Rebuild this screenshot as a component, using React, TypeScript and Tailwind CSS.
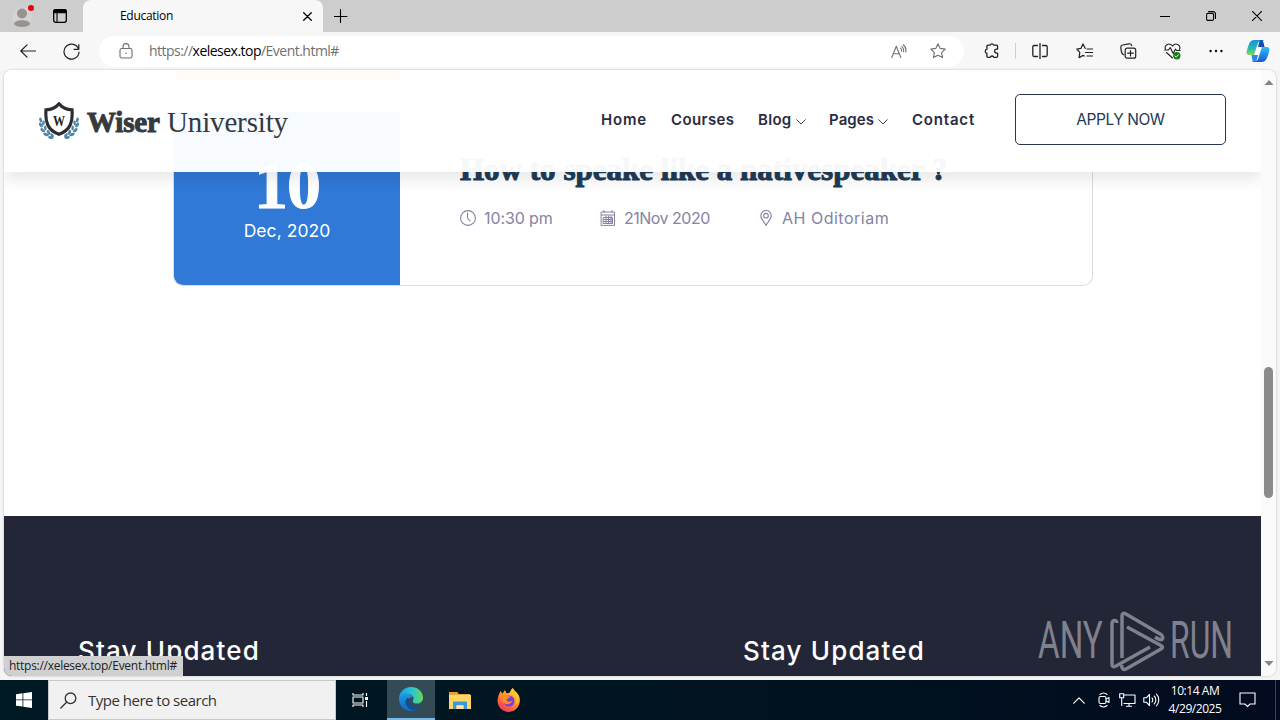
import type { ReactNode } from 'react';

const ui = "font-['Open_Sans','Noto_Sans',sans-serif]";

type SvgProps = { w: number; h: number; box: string; className?: string; children: ReactNode };
function Svg({ w, h, box, className = '', children }: SvgProps) {
  return (
    <svg width={w} height={h} viewBox={box} fill="none" stroke="currentColor" strokeWidth="1.1" strokeLinecap="round" strokeLinejoin="round" className={`block shrink-0 ${className}`}>
      {children}
    </svg>
  );
}

function TabStrip() {
  return (
    <div className="flex h-8 shrink-0 items-stretch bg-[#cdcdcd] text-black">
      <div className="flex w-[83px] items-center rounded-br-md pl-3">
        <Svg w={24} h={24} box="0 0 24 24">
          <circle cx="10" cy="13" r="10" fill="#d6d3d1" stroke="none" />
          <circle cx="10" cy="9.5" r="5" fill="#969290" stroke="none" />
          <path d="M2 20c0-5 16-5 16 0-2 4-14 4-16 0z" fill="#969290" stroke="none" />
          <circle cx="19" cy="4" r="3" fill="#e3000f" stroke="none" />
        </Svg>
        <Svg w={14} h={14} box="0 0 14 14" className="ml-[17px]">
          <rect x="0.7" y="0.7" width="12.6" height="12.6" rx="2" strokeWidth="1.3" />
          <path d="M1 1h12v2.800H1z" fill="currentColor" />
          <path d="M4 4v9" />
        </Svg>
      </div>
      <div className="flex w-[240px] items-center rounded-t-lg bg-[#f7f7f7] pl-[37px] pr-[11px]">
        <span className={`${ui} grow whitespace-nowrap text-[12px] leading-4 tracking-[-0.3px]`}>Education</span>
        <Svg w={9} h={9} box="0 0 9 9"><path d="M.7.7l7.6 7.6M8.3.7L.7 8.3" strokeWidth="1.3" /></Svg>
      </div>
      <div className="flex grow items-center justify-between pl-[11px] pr-[18px]">
        <Svg w={14} h={14} box="0 0 14 14"><path d="M6.500 .5v13M0 7.500h13" /></Svg>
        <div className="flex items-center">
          <Svg w={10} h={10} box="0 0 10 10"><path d="M0 5.5h10" /></Svg>
          <Svg w={10} h={10} box="0 0 10 10" className="ml-[36px]">
            <rect x=".6" y="2.4" width="7" height="7" rx="1.4" />
            <path d="M2.5.6h4.7a2.3 2.3 0 0 1 2.3 2.3v4.6" />
          </Svg>
          <Svg w={10} h={10} box="0 0 10 10" className="ml-[36px]"><path d="M.3.3l9.4 9.4M9.7.3L.3 9.7" /></Svg>
        </div>
      </div>
    </div>
  );
}

const starPath = 'M8 .8l2.2 4.6 5 .7-3.6 3.5.9 5L8 12.2l-4.500 2.4.9-5L.8 6.1l5-.7z';

function Toolbar() {
  return (
    <div className="flex h-[38px] shrink-0 items-center bg-[#f7f7f7] text-[#222]">
      <Svg w={16} h={14} box="0 0 16 14" className="ml-5"><path d="M15.5 7H.8M7 .8L.8 7 7 13.2" strokeWidth="1.2" /></Svg>
      <Svg w={17} h={17} box="0 0 17 17" className="ml-[27px]">
        <path d="M15.6 6.2A7.5 7.5 0 1 0 16 9M15.8 1.5v4.8H11" strokeWidth="1.2" />
      </Svg>
      <div className="ml-[19px] flex h-[31px] w-[865px] items-center rounded-full bg-white pl-5 pr-[18px] text-[#707070]">
        <Svg w={14} h={16} box="0 0 14 16">
          <rect x="1" y="5.5" width="12" height="9.5" rx="1.8" />
          <path d="M4 5.5V3.6a3 3 0 0 1 6 0v1.9" />
          <circle cx="7" cy="10.2" r=".8" fill="currentColor" stroke="none" />
        </Svg>
        <span className={`${ui} ml-4 grow whitespace-nowrap text-[14px] leading-5 tracking-[-0.52px]`}>
          https://<span className="text-black">xelesex.top</span>/Event.html#
        </span>
        <Svg w={16} h={15} box="0 0 16 15">
          <path d="M.8 13.5L5.3 2.3l4.5 11.2M2.3 9.7h6M9.500 4.2c.9.8 1.2 1.8 1 3M10.8 2.3c1.700 1.4 2.2 3.2 1.700 5.4M12.3.7c2.4 1.9 3.1 4.4 2.4 7.3" />
        </Svg>
        <Svg w={16} h={16} box="0 0 16 16" className="ml-[23px]"><path d={starPath} /></Svg>
      </div>
      <Svg w={16} h={16} box="0 0 16 16" className="ml-5">
        <path d="M4 2.2h2.3a1.7 1.7 0 0 1 3.3 0h2.9c.7 0 1.1.4 1.1 1.1v2.8h-1a2 2 0 0 0 0 4h1v3.2c0 .7-.4 1.1-1.1 1.1H9.8a1.8 1.8 0 0 0-3.5 0H4c-.7 0-1.1-.4-1.1-1.1v-3a2.1 2.1 0 0 1 0-4.1V3.3c0-.7.4-1.1 1.1-1.1z" strokeWidth="1.3" />
      </Svg>
      <div className="ml-[15px] h-4 w-px bg-[#cfcfcf]" />
      <Svg w={16} h={16} box="0 0 16 16" className="ml-4">
        <path d="M8 .5v15M5.5 2.5H2.200C1.300 2.500.8 3 .8 4v8c0 1 .5 1.500 1.400 1.500h3.300M10.500 2.500h3.300c.9 0 1.400.5 1.400 1.500v8c0 1-.5 1.500-1.400 1.500h-3.300" strokeWidth="1.3" />
      </Svg>
      <Svg w={17} h={16} box="0 0 17 16" className="ml-7">
        <path d="M9.300 5.400L7 .9 4.900 5.400.8 6.100l3 3.300-.7 5.200 4-2.200 1.200.6M11 6h5.500M9.500 9.500h7M11 13h5.500" strokeWidth="1.2" />
      </Svg>
      <Svg w={17} h={16} box="0 0 17 16" className="ml-[27px]">
        <rect x="5.200" y="5.200" width="10.500" height="10" rx="2" strokeWidth="1.2" />
        <path d="M10.500 7.500v5.500M7.700 10.200h5.600M3.700 11.800C2 11 1.500 10 1.300 8.400L.8 4.500C.7 3 1.300 2.200 2.600 2L9 .8c1.500-.2 2.400.4 2.700 1.800" strokeWidth="1.2" />
      </Svg>
      <Svg w={18} h={17} box="0 0 18 17" className="ml-[27px]">
        <path d="M1.500 6.500C-.2 2.500 4.800-1.200 8.500 3c3.700-4.200 8.700-.5 7 3.500M.8 7h3.700l1.700-2.500 3 6L11.500 6l1 1.500h3.500M2.500 9.500l6 5.500" strokeWidth="1.1" />
        <circle cx="12.800" cy="12.800" r="3.700" fill="#13801a" stroke="none" />
        <path d="M11 12.900l1.200 1.200 2.400-2.400" stroke="white" strokeWidth=".9" />
      </Svg>
      <Svg w={14} h={4} box="0 0 14 4" className="ml-[27px]">
        <g fill="#111" stroke="none"><circle cx="1.600" cy="2" r="1.200" /><circle cx="7" cy="2" r="1.200" /><circle cx="12.400" cy="2" r="1.200" /></g>
      </Svg>
      <Svg w={24} h={22} box="0 0 24 22" className="ml-[23px]">
        <defs>
          <linearGradient id="cpA" x1="0" y1="0" x2="0" y2="1"><stop stopColor="#1590df" /><stop offset=".55" stopColor="#29b9b0" /><stop offset="1" stopColor="#7ed957" /></linearGradient>
          <linearGradient id="cpB" x1="0" y1="0" x2="0" y2="1"><stop stopColor="#35bdf5" /><stop offset="1" stopColor="#155bd5" /></linearGradient>
        </defs>
        <path d="M17 0H8C4 0 3 4 1.500 8.500S0 15 4 15h4L12 3c.5-1.500 1.500-2 3-2h3z" fill="url(#cpA)" stroke="none" />
        <path d="M7 22h9c4 0 5-4 6.500-8.500S24 7 20 7h-4l-4 12c-.5 1.500-1.500 2-3 2H6z" fill="url(#cpB)" stroke="none" />
        <path d="M15 0c2 0 2.500 2 3.500 7H12l1-4c.5-2 1-3 2-3z" fill="#164bb4" stroke="none" />
        <path d="M9 22c-2 0-3-2-3.500-7H12l-1 4c-.5 2-1 3-2 3z" fill="#2688ed" stroke="none" />
        <path d="M11 7h4l-2.500 8H9z" fill="#fff" stroke="none" />
      </Svg>
    </div>
  );
}

function Leaves() {
  return (
    <g fill="#4f87aa" stroke="none">
      <ellipse cx="1.700" cy="18" rx="1.400" ry="2.600" transform="rotate(-15 1.700 18)" />
      <ellipse cx="1.800" cy="23" rx="1.500" ry="2.700" transform="rotate(-35 1.800 23)" />
      <ellipse cx="4.400" cy="21" rx="1.300" ry="2.500" transform="rotate(10 4.400 21)" />
      <ellipse cx="3.700" cy="28.300" rx="1.500" ry="2.800" transform="rotate(-50 3.700 28.300)" />
      <ellipse cx="6.300" cy="26" rx="1.300" ry="2.600" transform="rotate(-5 6.300 26)" />
      <ellipse cx="7" cy="32.500" rx="1.500" ry="2.900" transform="rotate(-68 7 32.500)" />
      <ellipse cx="9.500" cy="30.300" rx="1.400" ry="2.600" transform="rotate(-25 9.500 30.300)" />
      <ellipse cx="11.800" cy="35.500" rx="1.400" ry="2.800" transform="rotate(-85 11.800 35.500)" />
      <ellipse cx="13" cy="33.200" rx="1.300" ry="2.400" transform="rotate(-45 13 33.200)" />
    </g>
  );
}

function Logo() {
  return (
    <div className="flex items-start text-[#353940]">
      <svg width="40" height="38" viewBox="0 0 40 38" className="block shrink-0">
        <Leaves />
        <g transform="translate(40 0) scale(-1 1)"><Leaves /></g>
        <path d="M20 1.800c3.500 4.200 8 6 13 6 1 12-1.500 20.500-13 24.500C8.500 28.300 6 19.800 7 7.800c5 0 9.500-1.800 13-6z" fill="white" stroke="#2c2c32" strokeWidth="3.200" />
        <text x="20" y="24" textAnchor="middle" fontSize="14" fontWeight="bold" fill="#222" fontFamily="Liberation Serif, serif" textLength="12" lengthAdjust="spacingAndGlyphs">W</text>
      </svg>
      <div className="ml-2 flex whitespace-nowrap font-['Liberation_Serif',serif] text-[29px] leading-[40px]">
        <span className="w-[80px] font-bold tracking-[-0.150px] [-webkit-text-stroke:1px_#353940]">Wiser</span>
        <span className="tracking-[-0.150px]">University</span>
      </div>
    </div>
  );
}

function Chevron() {
  return <Svg w={10} h={6} box="0 0 10 6" className="ml-[4px] mt-[3px]"><path d="M.7.700L5 5 9.300.7" strokeWidth=".9" /></Svg>;
}

function SiteHeader() {
  return (
    <header className="absolute inset-x-0 top-0 flex h-[102px] items-start bg-white/[0.96] pl-[35px] pr-[35px] pt-6 shadow-[0_8px_14px_rgba(0,0,0,0.09)]">
      <div className="w-[562px] pt-[8px]"><Logo /></div>
      <nav className="flex h-[51px] items-center whitespace-nowrap pt-px font-['Inter',sans-serif] text-[15px] font-semibold text-[#2b2c3f]">
        <span className="w-[70px] tracking-[0.8px]">Home</span>
        <span className="w-[87px] tracking-[0.400px]">Courses</span>
        <span className="flex w-[71px] items-center tracking-[0.300px]">Blog<Chevron /></span>
        <span className="flex w-[83px] items-center tracking-[0.100px]">Pages<Chevron /></span>
        <span className="w-[103px] tracking-[0.800px]">Contact</span>
      </nav>
      <button className="h-[51px] w-[211px] shrink-0 whitespace-nowrap rounded-[5px] border border-[#24384f] font-['Inter',sans-serif] text-[15.500px] tracking-[-0.45px] text-[#213a58]">APPLY NOW</button>
    </header>
  );
}

function EventCard() {
  return (
    <article className="ml-[169px] mt-8 flex h-[174px] w-[920px] overflow-hidden rounded-b-[10px] border border-t-0 border-[#dcdcdc] bg-white">
      <div className="flex w-[226px] shrink-0 flex-col items-center bg-[#3079d7] text-white">
        <span className="mt-[41px] whitespace-nowrap font-['Liberation_Serif',serif] text-[68px] font-bold leading-[65px] tracking-[-1px] [-webkit-text-stroke:1px_white]">10</span>
        <span className="mt-px whitespace-nowrap font-['Inter',sans-serif] text-[17.500px] leading-6 tracking-[0.05px]">Dec, 2020</span>
      </div>
      <div className="pl-[60px] pt-[40px]">
        <h2 className="whitespace-nowrap font-['Liberation_Serif',serif] text-[31px] font-bold leading-9 tracking-[0.01px] text-[#203b58] [-webkit-text-stroke:1px_#203b58]">How to speake like a nativespeaker ?</h2>
        <div className="mt-[18px] flex h-6 items-center whitespace-nowrap font-['Inter',sans-serif] text-[16px] text-[#8583a4]">
          <Svg w={16} h={16} box="0 0 16 16"><circle cx="8" cy="8" r="7.400" /><path d="M7.500 3v5l2.500 3" /></Svg>
          <span className="ml-2 w-[116px] tracking-[-0.100px]">10:30 pm</span>
          <Svg w={16} h={16} box="0 0 16 16">
            <path d="M1.500 2h13v13.400h-13zM1.500 5h13M4 .5v2M12 .5v2M3.500 7.500h9v6h-9zM6 6v7.500M8.500 6v7.500M11 6v7.500M3.500 9.500h9M3.500 11.500h9" strokeWidth="1" />
          </Svg>
          <span className="ml-2 w-[136px] tracking-[-0.500px]">21Nov 2020</span>
          <Svg w={12} h={16} box="0 0 12 16"><path d="M6 15.400C3 10.500.8 8.500.8 5.700a5.200 5.200 0 0 1 10.400 0c0 2.800-2.200 4.800-5.200 9.700z" /><circle cx="6" cy="5.700" r="2.300" /></Svg>
          <span className="ml-[10px] tracking-[0.500px]">AH Oditoriam</span>
        </div>
      </div>
    </article>
  );
}

function Watermark() {
  return (
    <div className="absolute bottom-1 left-[1034px] flex h-[62px] items-center text-[#858692] opacity-95">
      <div className="w-[70px] whitespace-nowrap font-['Roboto',sans-serif] text-[51px] leading-[62px]"><span className="inline-block origin-left scale-x-[0.65]">ANY</span></div>
      <svg width="58" height="62" viewBox="0 0 58 62" fill="none" stroke="currentColor" strokeWidth="3.500" strokeLinejoin="round" className="block shrink-0">
        <path d="M9 13C9 9.500 4 9.500 4 14V54Q4 58 8 56L42 37" />
        <path d="M14 48V6Q14 2 18 4L53 24.500Q56 27 54 29.500 52 30.500 47 27" />
        <path d="M19 17L53 35.500Q56 37 53 39L18 59Q14 61 13.500 55" />
      </svg>
      <div className="ml-[4px] w-[70px] whitespace-nowrap font-['Roboto',sans-serif] text-[51px] leading-[62px]"><span className="inline-block origin-left scale-x-[0.625]">RUN</span></div>
    </div>
  );
}

function Page() {
  return (
    <div className="mx-1 flex h-[606px] shrink-0 overflow-hidden rounded-lg bg-white shadow-[0_0_2px_rgba(0,0,0,0.3)]">
      <main className="relative flex w-[1257px] flex-col overflow-hidden bg-white">
        <div className="ml-[172px] h-[10px] w-[224px] shrink-0 bg-[#ffb42f]" />
        <EventCard />
        <footer className="mt-[230px] flex h-[160px] shrink-0 bg-[#232637] pl-[74px] pt-[116px] font-['Inter',sans-serif] text-[26px] font-medium leading-[38px] tracking-[1.150px] text-white">
          <div className="w-[665px]">Stay Updated</div>
          <div>Stay Updated</div>
        </footer>
        <SiteHeader />
        <Watermark />
        <div className={`${ui} absolute bottom-0 left-0 h-5 w-[179px] whitespace-nowrap bg-[#d0d0d0] pl-[5px] text-[12px] leading-5 tracking-[-0.280px] text-[#222]`}>https://xelesex.top/Event.html#</div>
      </main>
      <div className="flex w-[15px] flex-col items-center bg-[#fafafa] pb-[10px] pt-[10px] text-[#858585]">
        <Svg w={10} h={5} box="0 0 10 5"><path d="M5 0l4.500 5H.5z" fill="currentColor" stroke="none" /></Svg>
        <div className="mt-[282px] h-[131px] w-[9px] rounded-full bg-[#8b8b8b]" />
        <Svg w={10} h={5} box="0 0 10 5" className="mt-auto"><path d="M5 5L.5 0h9z" fill="currentColor" stroke="none" /></Svg>
      </div>
    </div>
  );
}

function EdgeLogo() {
  return (
    <svg width="24" height="24" viewBox="0 0 24 24" className="block">
      <defs>
        <linearGradient id="edA" x1="0" y1="0" x2="1" y2="0"><stop stopColor="#199de2" /><stop offset=".55" stopColor="#29c6cf" /><stop offset="1" stopColor="#64dc54" /></linearGradient>
        <linearGradient id="edB" x1="0" y1="0" x2="0" y2="1"><stop stopColor="#1c9be5" /><stop offset="1" stopColor="#1267c3" /></linearGradient>
      </defs>
      <path d="M0 12C0 5 5 0 12 0s12 5 12 10.500c0 4-3 6-6 6-3.500 0-5-1.500-4-3 2-3-1-6.500-5-6.500-5 0-8 2.500-9 5z" fill="url(#edA)" />
      <path d="M0 12c1-4 4.500-6 8.500-5.500 3 .3 5 2 5 4-4-.5-5.500 2-4.500 5 1.500 4 7 6 12 3.500C19 22 16 24 12 24 5 24 0 18.500 0 12z" fill="url(#edB)" />
      <path d="M9 10.500c-3 2-3.500 6-1 9 2 2.500 5 4 8 3.600 2.500-.8 4-2.400 5.400-4.100-6 2.500-13-1-12-7z" fill="#174d91" />
    </svg>
  );
}

function Firefox() {
  return (
    <svg width="24" height="24" viewBox="0 0 24 24" className="block">
      <defs><linearGradient id="ff" x1=".8" y1="0" x2=".2" y2="1"><stop stopColor="#ffe83b" /><stop offset=".45" stopColor="#ff9226" /><stop offset="1" stopColor="#f92966" /></linearGradient></defs>
      <path d="M3.500 3l2 2.500L8 2l1.500 3.200c2 0 3-.2 4-2C14 1.500 15 .5 16 0c1 3 4 4 5.500 7 4 7-1 17-9.500 17C4 24-1 17 1 9.500 1.500 7 2.500 5 3.500 3z" fill="url(#ff)" />
      <circle cx="12" cy="13" r="5.500" fill="#7641d8" />
      <path d="M3.500 8c2-2 5-2 7 0l3 .5c-1 2-3 2-4 3 0 2 3 3.500 6 1-1 4-7 5-9.500 1.500C5 12 5 10 3.500 8z" fill="#ff8b29" />
      <path d="M14 5c5 2 7 7 4 12 3-2 5-6 3-10l-5-6z" fill="#ffc42c" />
    </svg>
  );
}

function Taskbar() {
  return (
    <div className={`${ui} mt-1 flex h-10 shrink-0 items-center bg-[linear-gradient(90deg,#001a24,#00131f_60%,#020b20)] text-white`}>
      <div className="flex w-12 justify-center">
        <svg width="16" height="16" viewBox="0 0 16 16" fill="white" className="block"><path d="M0 2.200L6.500 1.300v6.200H0zM7.300 1.200L16 0v7.500H7.300zM0 8.300h6.500v6.300L0 13.700zM7.300 8.300H16V16l-8.700-1.200z" /></svg>
      </div>
      <div className="flex h-10 w-[288px] items-center border border-[#c8c8c8] bg-[#f1f1f1] pl-[11px] text-[#333]">
        <Svg w={17} h={17} box="0 0 17 17"><circle cx="10.500" cy="6.300" r="5.300" strokeWidth="1.300" /><path d="M6.600 10.200L.8 16" strokeWidth="1.300" /></Svg>
        <span className="ml-[11px] whitespace-nowrap text-[15px] leading-5 tracking-[-0.500px]">Type here to search</span>
      </div>
      <div className="flex w-[49px] justify-center">
        <Svg w={17} h={16} box="0 0 17 16"><path d="M1 1v2h10V1M1 15v-2h10v2M1 5h10v6H1zM14.500 1v3M14.500 9v6" strokeLinecap="butt" /><path d="M13 5h3v3h-3z" fill="white" stroke="none" /></Svg>
      </div>
      <div className="ml-[2px] flex h-10 w-12 items-center justify-center border-b-2 border-[#76b9ed] bg-[#334b55]"><EdgeLogo /></div>
      <div className="flex w-[50px] justify-center">
        <svg width="22" height="19" viewBox="0 0 22 19" className="block">
          <path d="M0 1h8l2 2h11v15H0z" fill="#e8a83a" /><path d="M0 4h22v14H0z" fill="#ffd767" /><path d="M0 1h8l1.500 2H0z" fill="#f29e1f" />
          <path d="M4 10.500h14V18h-3.500v-4h-7v4H4z" fill="#3e96db" /><path d="M7.500 15h7v3h-7z" fill="#ffe49a" />
        </svg>
      </div>
      <div className="flex w-12 justify-center"><Firefox /></div>
      <div className="ml-auto flex items-center">
        <Svg w={12} h={7} box="0 0 12 7"><path d="M.8 6.200L6 .9l5.200 5.300" strokeWidth="1.200" /></Svg>
        <Svg w={12} h={16} box="0 0 12 16" className="ml-[13px]"><rect x="1" y="4.500" width="7" height="7" rx="1.500" /><path d="M8 7l3-1.500v5L8 9M2 2.500c2-2 5-2 7 0M2 13.500c2 2 5 2 7 0" /></Svg>
        <Svg w={17} h={14} box="0 0 17 14" className="ml-[9px]"><path d="M5 2h11v8.500H4.500M10 10.500V13M7 13.300h6M.7.700h4v4h-4zM2.700 5v8" strokeLinecap="butt" /></Svg>
        <Svg w={17} h={14} box="0 0 17 14" className="ml-[7px]"><path d="M.8 4.800h2.500L6.500 1.500v11L3.300 9.200H.8zM9 5c1 1 1 3 0 4M11.200 3c2.200 2 2.200 6 0 8M13.500 1.200c3 3 3 8.600 0 11.600" /></Svg>
        <div className="ml-[7px] w-[56px] whitespace-nowrap text-center text-[12px] leading-[18px] tracking-[-0.450px]"><div>10:14 AM</div><div>4/29/2025</div></div>
        <Svg w={17} h={16} box="0 0 17 16" className="ml-4"><path d="M1 1h15v11h-5l-2.500 2.500L6 12H1z" strokeLinejoin="miter" /></Svg>
        <div className="ml-[19px] mr-1 h-10 w-px bg-[#39435a]" />
      </div>
    </div>
  );
}

export default function App() {
  return (
    <div className="flex h-[720px] w-[1280px] flex-col overflow-hidden bg-[#f4f4f4]">
      <TabStrip />
      <Toolbar />
      <Page />
      <Taskbar />
    </div>
  );
}
